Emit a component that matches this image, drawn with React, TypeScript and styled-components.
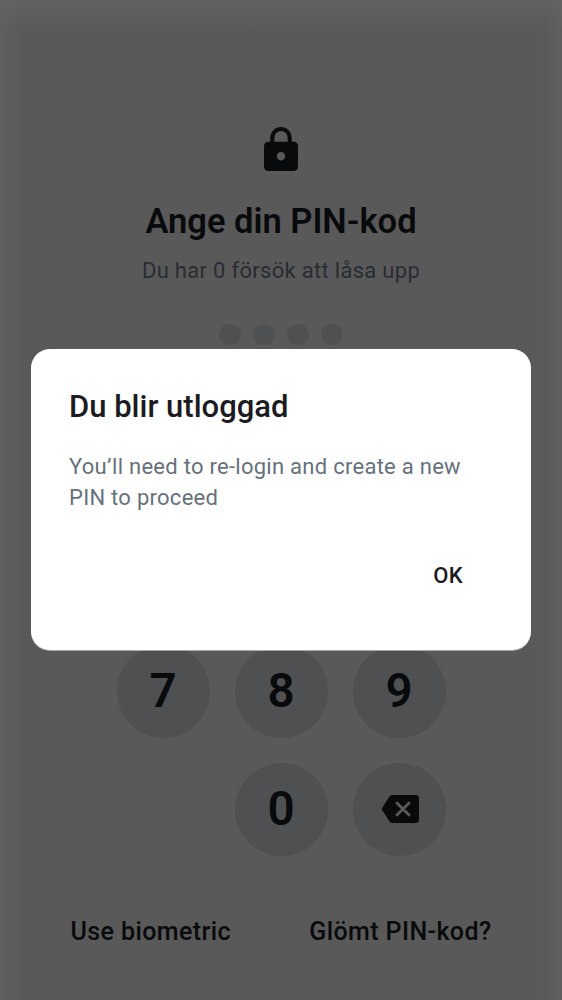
import React from "react";
import styled, { createGlobalStyle } from "styled-components";

const Global = createGlobalStyle`
  * { box-sizing: border-box; }
  body { margin: 0; background: #595959; font-family: Roboto, "Liberation Sans", sans-serif; }
`;
const Screen = styled.main`
  width: 562px; height: 1000px; overflow: hidden; position: relative;
  display: flex; flex-direction: column; align-items: center;
  padding-top: 127px; color: #090a0c;
  background:
    linear-gradient(to bottom, rgba(104, 104, 104, 0.5), rgba(89, 89, 89, 0) 30px),
    linear-gradient(to right, rgba(104, 104, 104, 0.4), rgba(89, 89, 89, 0) 22px, rgba(89, 89, 89, 0) calc(100% - 22px), rgba(104, 104, 104, 0.4)),
    #595959;
`;
const Lock = styled.svg`display: block; width: 34px; height: 44px;`;
const Title = styled.h1`
  margin: 29px 0 0; font-size: 34.5px; line-height: 42px; font-weight: 600; white-space: nowrap;
`;
const Hint = styled.p`
  margin: 13px 0 0; font-size: 22px; line-height: 32px; color: #282d32; letter-spacing: 0.3px; white-space: nowrap;
`;
const Dots = styled.div`display: flex; gap: 12.4px; margin-top: 36.5px;`;
const Dot = styled.i`width: 21.8px; height: 21.8px; border-radius: 50%; background: #4f5052;`;
const Keypad = styled.div`
  display: grid; grid-template-columns: repeat(3, 93px); gap: 25px; margin-top: 299.7px;
`;
const Key = styled.button`
  width: 93px; height: 93px; border: 0; border-radius: 50%; padding: 0 0 1px;
  background: #4f5052; color: #090a0c; font: 600 47.5px/92px Roboto, sans-serif;
  display: flex; align-items: center; justify-content: center;
`;
const Backspace = styled.svg`display: block; width: 38px; height: 28px; margin: 1px 0 0 1px;`;
const Links = styled.div`
  display: flex; justify-content: space-between; width: 421px; margin-top: 60.5px;
`;
const Link = styled.span`font-size: 25px; line-height: 32px; font-weight: 500; letter-spacing: 0.4px; white-space: nowrap;`;
const Dialog = styled.section`
  position: absolute; left: 31px; top: 349px; width: 500px; height: 301px;
  border-radius: 19px; background: #fff; padding: 38px 38px 0; display: flex; flex-direction: column;
  box-shadow: 0 1px 0 #a9a9a9;
`;
const DialogTitle = styled.h2`margin: 0; font-size: 31px; line-height: 40px; font-weight: 500; color: #1b1b21; white-space: nowrap;`;
const DialogText = styled.p`margin: 24px 0 0; font-size: 22px; line-height: 31px; letter-spacing: 0.27px; color: #66717c; white-space: nowrap;`;
const Ok = styled.button`
  align-self: flex-end; border: 0; padding: 0; background: none; margin: 47px 30px 0 0;
  font: 500 22px/32px Roboto, sans-serif; letter-spacing: 0.3px; color: #1b1b21;
`;

export default function App() {
  return (
    <>
      <Global />
      <Screen>
        <Lock viewBox="0 0 34 44" aria-hidden="true">
          <path d="M8.3 17V10.7a8.7 8.7 0 0 1 17.4 0V17" fill="none" stroke="#090a0c" strokeWidth="4" />
          <path fill="#090a0c" fillRule="evenodd" d="M4.2 14.8h25.6A4.2 4.2 0 0 1 34 19v20.8a4.2 4.2 0 0 1-4.2 4.2H4.2A4.2 4.2 0 0 1 0 39.8V19a4.2 4.2 0 0 1 4.2-4.2zM17 25.1a4.2 4.2 0 1 0 0 8.4 4.2 4.2 0 0 0 0-8.4z" />
        </Lock>
        <Title>Ange din PIN-kod</Title>
        <Hint>Du har 0 försök att låsa upp</Hint>
        <Dots><Dot /><Dot /><Dot /><Dot /></Dots>
        <Keypad>
          <Key>7</Key><Key>8</Key><Key>9</Key>
          <span /><Key>0</Key>
          <Key aria-label="Backspace">
            <Backspace viewBox="0 0 38 28">
              <path fill="#090a0c" d="M11.3 0H34.5Q38 0 38 3.5V24.5Q38 28 34.5 28H11.3Q9.4 28 8.3 26.3L.5 14 8.3 1.7Q9.4 0 11.3 0z" />
              <path d="M15.2 7.2 28.8 20.8M28.8 7.2 15.2 20.8" fill="none" stroke="#595a5c" strokeWidth="2.8" />
            </Backspace>
          </Key>
        </Keypad>
        <Links><Link>Use biometric</Link><Link>Glömt PIN-kod?</Link></Links>
        <Dialog role="dialog">
          <DialogTitle>Du blir utloggad</DialogTitle>
          <DialogText>You’ll need to re-login and create a new<br />PIN to proceed</DialogText>
          <Ok>OK</Ok>
        </Dialog>
      </Screen>
    </>
  );
}
